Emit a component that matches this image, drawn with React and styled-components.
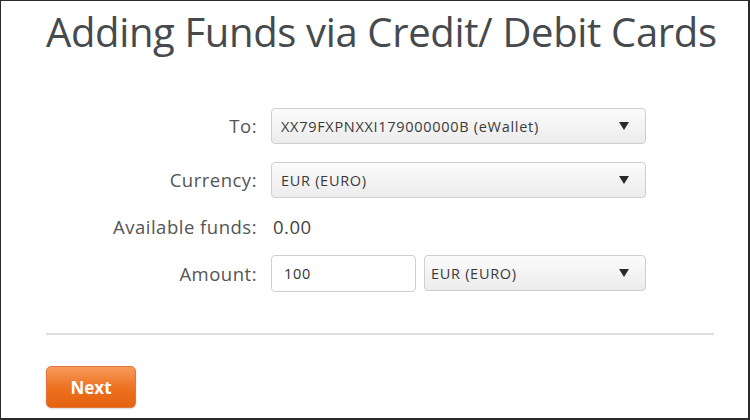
import styled, { createGlobalStyle } from "styled-components";

const GlobalStyle = createGlobalStyle`
  html, body {
    margin: 0;
    padding: 0;
    background: #ffffff;
  }
  * {
    box-sizing: border-box;
  }
`;

export default function App() {
  return (
    <>
      <GlobalStyle />
      <Frame>
        <Title>Adding Funds via Credit/ Debit Cards</Title>

        <Form>
          <Label>To:</Label>
          <Select>
            <span>XX79FXPNXXI179000000B (eWallet)</span>
            <Arrow />
          </Select>

          <Label>Currency:</Label>
          <Select>
            <span>EUR (EURO)</span>
            <Arrow />
          </Select>

          <Label $short>Available funds:</Label>
          <Value>0.00</Value>

          <Label>Amount:</Label>
          <AmountRow>
            <Input defaultValue="100" />
            <Select $pad={6}>
              <span>EUR (EURO)</span>
              <Arrow />
            </Select>
          </AmountRow>
        </Form>

        <Divider />

        <NextButton>Next</NextButton>
      </Frame>
    </>
  );
}

const Frame = styled.div`
  width: 750px;
  height: 420px;
  border-top: 1px solid #2b2b2b;
  border-left: 1px solid #2b2b2b;
  border-right: 2px solid #2b2b2b;
  border-bottom: 2px solid #2b2b2b;
  padding: 0 34px 0 45px;
  font-family: "Open Sans", "Noto Sans", sans-serif;
  display: flex;
  flex-direction: column;
  overflow: hidden;
`;

const Title = styled.h1`
  margin: 7px 0 0;
  font-size: 40px;
  line-height: 48px;
  font-weight: 400;
  color: #464a4d;
  text-align: center;
  letter-spacing: -0.35px;
  white-space: nowrap;
`;

const Form = styled.div`
  display: grid;
  grid-template-columns: 211px 375px;
  column-gap: 14px;
  row-gap: 18px;
  align-items: center;
  margin-top: 52px;
`;

const Label = styled.div`
  text-align: right;
  font-size: 18.5px;
  letter-spacing: 0.5px;
  color: #555;
  line-height: ${(p) => (p.$short ? "21px" : "20px")};
  white-space: nowrap;
`;

const Value = styled.div`
  font-size: 18.5px;
  letter-spacing: 0.5px;
  color: #444;
  padding-left: 2px;
  line-height: 21px;
`;

const Select = styled.div`
  height: 36px;
  flex: 1;
  display: flex;
  align-items: center;
  justify-content: space-between;
  padding: 0 16px 0 ${(p) => p.$pad ?? 9}px;
  border: 1px solid #cfcfcf;
  border-radius: 4px;
  background: linear-gradient(#fbfbfb, #ececec);
  font-size: 14.5px;
  letter-spacing: 0.7px;
  color: #3a3a3a;
  white-space: nowrap;
`;

const Arrow = styled.i`
  width: 0;
  height: 0;
  border-left: 5px solid transparent;
  border-right: 5px solid transparent;
  border-top: 8px solid #2a2a2a;
`;

const AmountRow = styled.div`
  display: flex;
  gap: 8px;
`;

const Input = styled.input`
  width: 145px;
  height: 37px;
  border: 1px solid #cfcfcf;
  border-radius: 4px;
  padding: 0 12px;
  font-family: inherit;
  font-size: 14.5px;
  letter-spacing: 0.7px;
  color: #333;
  background: #fff;
  outline: none;
`;

const Divider = styled.hr`
  width: 668px;
  margin: 41px 0 0;
  border: 0;
  border-top: 2px solid #dedede;
`;

const NextButton = styled.button`
  width: 90px;
  height: 42px;
  margin-top: 31px;
  border: 1px solid #e3763a;
  border-radius: 5px;
  background: linear-gradient(#f89a5a, #ec6f1f 55%, #e5630f);
  box-shadow: 0 1px 2px rgba(0, 0, 0, 0.15);
  color: #fff;
  font-family: inherit;
  font-size: 17px;
  font-weight: 700;
  cursor: pointer;
`;
